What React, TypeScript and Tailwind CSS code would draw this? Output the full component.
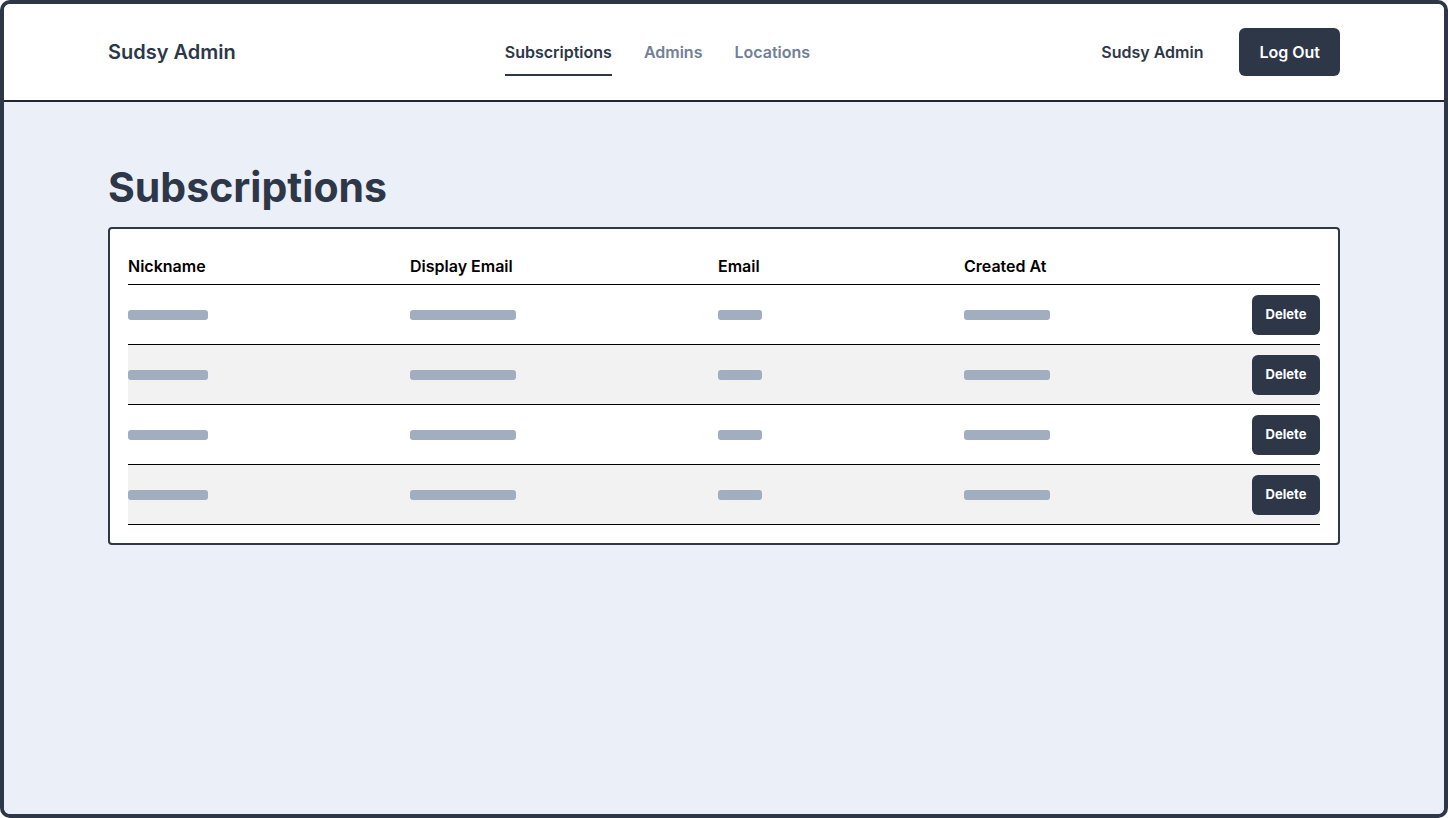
import React from 'react';

const rows = [0, 1, 2, 3];

const Bar = ({ w }: { w: string }) => <div className={`h-[10px] rounded-[3px] bg-[#a0aec0] ${w}`} />;

export default function App() {
     return (
          <div className="h-[818px] w-full bg-white font-['Inter',sans-serif]">
               <div className="flex h-full flex-col overflow-hidden rounded-[10px] border-4 border-[#2d3748]">
                    <header className="flex h-[98px] shrink-0 items-center border-b-2 border-[#1f2633] bg-white px-[104px]">
                         <span className="text-[20px] font-semibold text-[#2d3748]">Sudsy Admin</span>
                         <nav className="ml-[269px] flex items-center gap-8 text-[16px] font-semibold">
                              <a className="border-b-2 border-[#2d3748] pt-[12px] pb-[10px] leading-6 text-[#2d3748]">Subscriptions</a>
                              <a className="border-b-2 border-transparent pt-[12px] pb-[10px] leading-6 text-[#718096]">Admins</a>
                              <a className="border-b-2 border-transparent pt-[12px] pb-[10px] leading-6 text-[#718096]">Locations</a>
                         </nav>
                         <div className="ml-auto flex items-center gap-9">
                              <span className="text-[16px] font-semibold text-[#2d3748]">Sudsy Admin</span>
                              <button className="h-12 rounded-md bg-[#2d3748] px-5 text-[16px] font-semibold text-white">Log Out</button>
                         </div>
                    </header>

                    <main className="flex-1 bg-[#ebeff7] px-[104px]">
                         <h1 className="mt-[61px] mb-[16px] text-[41px] leading-[48px] font-bold text-[#2d3748]">Subscriptions</h1>
                         <div className="rounded-[4px] border-2 border-[#2d3748] bg-white p-[18px]">
                              <div className="grid h-[38px] grid-cols-[282px_308px_246px_1fr] items-center border-b border-black text-[16px] font-semibold text-black">
                                   <span>Nickname</span>
                                   <span>Display Email</span>
                                   <span>Email</span>
                                   <span>Created At</span>
                              </div>
                              {rows.map((r) => (
                                   <div
                                        key={r}
                                        className={`grid h-[60px] grid-cols-[282px_308px_246px_1fr] items-center border-b border-black ${r % 2 === 1 ? 'bg-[#f2f2f2]' : 'bg-white'}`}
                                   >
                                        <Bar w="w-[80px]" />
                                        <Bar w="w-[106px]" />
                                        <Bar w="w-[44px]" />
                                        <div className="flex items-center justify-between">
                                             <Bar w="w-[86px]" />
                                             <button className="h-10 w-[68px] rounded-md bg-[#2d3748] text-[13px] font-bold text-white">Delete</button>
                                        </div>
                                   </div>
                              ))}
                         </div>
                    </main>
               </div>
          </div>
     );
}
